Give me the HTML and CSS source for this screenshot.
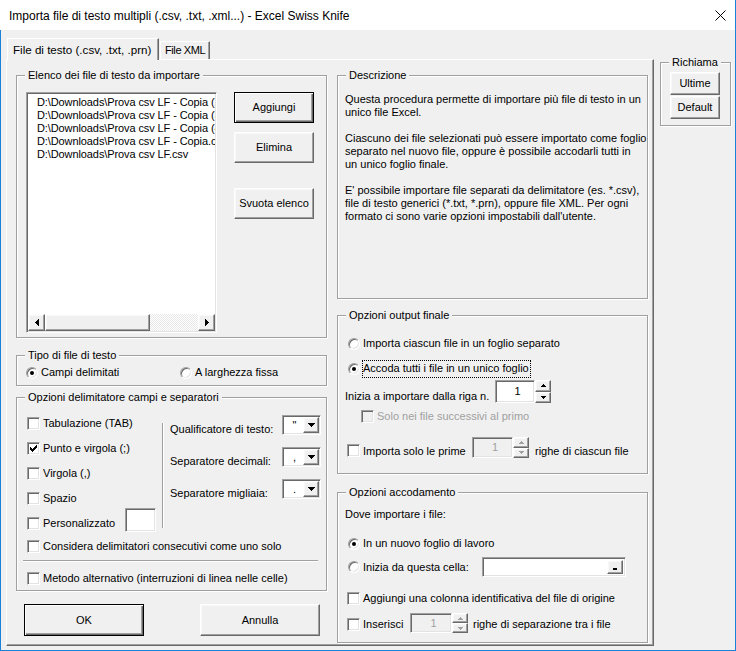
FILE: index.html
```html
<!DOCTYPE html>
<html lang="it">
<head>
<meta charset="utf-8">
<title>Importa file di testo multipli</title>
<link rel="stylesheet" href="styles.css">
</head>
<body>
<div class="window">
  <div class="titlebar">
    <span class="title">Importa file di testo multipli (.csv, .txt, .xml...) - Excel Swiss Knife</span>
    <svg class="close" width="11" height="11" viewBox="0 0 11 11" aria-hidden="true"><path d="M0.5 0.5L10.5 10.5M10.5 0.5L0.5 10.5" stroke="#000" stroke-width="1" fill="none"/></svg>
  </div>
  <div class="client">
    <div class="tabctl">
      <div class="tabs">
        <div class="tab active">File di testo (.csv, .txt, .prn)</div>
        <div class="tab tab2">File XML</div>
      </div>
      <div class="page">
        <div class="col">
          <fieldset class="group">
            <legend>Elenco dei file di testo da importare</legend>
            <div class="gbody list-body">
              <div class="listbox sunken">
                <div class="items">
                  <div>D:\Downloads\Prova csv LF - Copia (2).csv</div>
                  <div>D:\Downloads\Prova csv LF - Copia (3).csv</div>
                  <div>D:\Downloads\Prova csv LF - Copia (4).csv</div>
                  <div>D:\Downloads\Prova csv LF - Copia.csv</div>
                  <div>D:\Downloads\Prova csv LF.csv</div>
                </div>
                <div class="hscroll">
                  <span class="sb-btn raised"><svg width="4" height="7" viewBox="0 0 4 7"><path d="M0 3h1v1h-1zM1 2h1v3h-1zM2 1h1v5h-1zM3 0h1v7h-1z" fill="#000"/></svg></span>
                  <span class="sb-thumb raised"></span>
                  <span class="sb-track"></span>
                  <span class="sb-btn raised"><svg width="4" height="7" viewBox="0 0 4 7"><path d="M3 3h1v1h-1zM2 2h1v3h-1zM1 1h1v5h-1zM0 0h1v7h-1z" fill="#000"/></svg></span>
                </div>
              </div>
              <div class="btncol">
                <div class="btn default">Aggiungi</div>
                <div class="btn raised b-elimina">Elimina</div>
                <div class="btn raised b-svuota">Svuota elenco</div>
              </div>
            </div>
          </fieldset>

          <fieldset class="group g-tipo">
            <legend>Tipo di file di testo</legend>
            <div class="gbody tipo-body">
              <div class="opt"><span class="rad on"></span>Campi delimitati</div>
              <div class="opt"><span class="rad"></span>A larghezza fissa</div>
            </div>
          </fieldset>

          <fieldset class="group g-delim">
            <legend>Opzioni delimitatore campi e separatori</legend>
            <div class="gbody delim-body">
              <div class="delim-top">
                <div class="chkcol">
                  <div class="opt"><span class="chk sunken"></span>Tabulazione (TAB)</div>
                  <div class="opt"><span class="chk sunken"><svg width="9" height="9" viewBox="0 0 9 9"><path d="M1 3h1v3h-1zM2 4h1v3h-1zM3 5h1v3h-1zM4 4h1v3h-1zM5 3h1v3h-1zM6 2h1v3h-1zM7 1h1v3h-1z" fill="#000"/></svg></span>Punto e virgola (;)</div>
                  <div class="opt"><span class="chk sunken"></span>Virgola (,)</div>
                  <div class="opt"><span class="chk sunken"></span>Spazio</div>
                  <div class="opt"><span class="chk sunken"></span><span class="pers-label">Personalizzato</span><span class="tb sunken tb-pers"></span></div>
                </div>
                <div class="vsep"></div>
                <div class="qualcol">
                  <span class="qlabel">Qualificatore di testo:</span>
                  <span class="combo sunken"><span class="cv">"</span><span class="dd raised"><svg width="7" height="4" viewBox="0 0 7 4"><path d="M0 0h7v1h-7zM1 1h5v1h-5zM2 2h3v1h-3zM3 3h1v1h-1z" fill="#000"/></svg></span></span>
                  <span class="qlabel">Separatore decimali:</span>
                  <span class="combo sunken"><span class="cv">,</span><span class="dd raised"><svg width="7" height="4" viewBox="0 0 7 4"><path d="M0 0h7v1h-7zM1 1h5v1h-5zM2 2h3v1h-3zM3 3h1v1h-1z" fill="#000"/></svg></span></span>
                  <span class="qlabel">Separatore migliaia:</span>
                  <span class="combo sunken"><span class="cv">.</span><span class="dd raised"><svg width="7" height="4" viewBox="0 0 7 4"><path d="M0 0h7v1h-7zM1 1h5v1h-5zM2 2h3v1h-3zM3 3h1v1h-1z" fill="#000"/></svg></span></span>
                </div>
              </div>
              <div class="opt consid"><span class="chk sunken"></span>Considera delimitatori consecutivi come uno solo</div>
              <div class="hsep"></div>
              <div class="opt metodo"><span class="chk sunken"></span>Metodo alternativo (interruzioni di linea nelle celle)</div>
            </div>
          </fieldset>

          <div class="okrow">
            <div class="btn default b-ok">OK</div>
            <div class="btn raised b-ok">Annulla</div>
          </div>
        </div>

        <div class="col">
          <fieldset class="group">
            <legend>Descrizione</legend>
            <div class="gbody desc-body">
              <p>Questa procedura permette di importare più file di testo in un<br>unico file Excel.</p>
              <p>Ciascuno dei file selezionati può essere importato come foglio<br>separato nel nuovo file, oppure è possibile accodarli tutti in<br>un unico foglio finale.</p>
              <p>E' possibile importare file separati da delimitatore (es. *.csv),<br>file di testo generici (*.txt, *.prn), oppure file XML. Per ogni<br>formato ci sono varie opzioni impostabili dall'utente.</p>
            </div>
          </fieldset>

          <fieldset class="group g-out">
            <legend>Opzioni output finale</legend>
            <div class="gbody out-body">
              <div class="opt ind-r"><span class="rad"></span>Importa ciascun file in un foglio separato</div>
              <div class="opt ind-r r2"><span class="rad on"></span><span class="focus">Accoda tutti i file in un unico foglio</span></div>
              <div class="inizia">
                <span class="inizia-label">Inizia a importare dalla riga n.</span>
                <span class="tb sunken tb-riga">1</span>
                <span class="spin spin23"><span class="sp raised"><svg width="5" height="3" viewBox="0 0 5 3"><path d="M2 0h1v1h-1zM1 1h3v1h-3zM0 2h5v1h-5z" fill="#000"/></svg></span><span class="sp raised"><svg width="5" height="3" viewBox="0 0 5 3"><path d="M0 0h5v1h-5zM1 1h3v1h-3zM2 2h1v1h-1z" fill="#000"/></svg></span></span>
              </div>
              <div class="opt solo dis"><span class="chk sunken off"></span>Solo nei file successivi al primo</div>
              <div class="prime">
                <span class="chk sunken"></span>
                <span class="prime-label">Importa solo le prime</span>
                <span class="tb sunken off tb-prime">1</span>
                <span class="spin spin21 dis"><span class="sp raised"><svg width="5" height="3" viewBox="0 0 5 3"><path d="M2 0h1v1h-1zM1 1h3v1h-3zM0 2h5v1h-5z" fill="#a0a0a0"/></svg></span><span class="sp raised"><svg width="5" height="3" viewBox="0 0 5 3"><path d="M0 0h5v1h-5zM1 1h3v1h-3zM2 2h1v1h-1z" fill="#a0a0a0"/></svg></span></span>
                <span class="after">righe di ciascun file</span>
              </div>
            </div>
          </fieldset>

          <fieldset class="group g-acc">
            <legend>Opzioni accodamento</legend>
            <div class="gbody acc-body">
              <div class="dove">Dove importare i file:</div>
              <div class="opt ind-r nuovo"><span class="rad on"></span>In un nuovo foglio di lavoro</div>
              <div class="cella ind-r">
                <span class="rad"></span>
                <span class="cella-label">Inizia da questa cella:</span>
                <span class="refedit sunken"><span class="refbtn raised"><span class="bar"></span></span></span>
              </div>
              <div class="opt ind-c aggiungi"><span class="chk sunken"></span>Aggiungi una colonna identificativa del file di origine</div>
              <div class="inserisci ind-c">
                <span class="chk sunken"></span>
                <span class="ins-label">Inserisci</span>
                <span class="tb sunken off tb-ins">1</span>
                <span class="spin spin20 dis"><span class="sp raised"><svg width="5" height="3" viewBox="0 0 5 3"><path d="M2 0h1v1h-1zM1 1h3v1h-3zM0 2h5v1h-5z" fill="#a0a0a0"/></svg></span><span class="sp raised"><svg width="5" height="3" viewBox="0 0 5 3"><path d="M0 0h5v1h-5zM1 1h3v1h-3zM2 2h1v1h-1z" fill="#a0a0a0"/></svg></span></span>
                <span class="after">righe di separazione tra i file</span>
              </div>
            </div>
          </fieldset>
        </div>
      </div>
    </div>

    <fieldset class="group richiama">
      <legend>Richiama</legend>
      <div class="gbody rich-body">
        <div class="btn raised rbtn">Ultime</div>
        <div class="btn raised rbtn">Default</div>
      </div>
    </fieldset>
  </div>
</div>
</body>
</html>
```

FILE: styles.css
```css
* { box-sizing: border-box; }
html, body { margin: 0; padding: 0; }
body {
  width: 736px; height: 651px; overflow: hidden;
  background: #f0f0f0;
  font-family: "Liberation Sans", Arial, sans-serif;
  font-size: 11px; line-height: 13px; color: #000;
}
.window { width: 736px; height: 651px; display: flex; flex-direction: column; }

/* title bar */
.titlebar {
  height: 30px; flex: none; background: #fff;
  display: flex; align-items: center;
  padding-left: 9px;
  border-right: 1px solid #1a82d8;
}
.title { font-family: "Liberation Sans", Arial, sans-serif; font-size: 12px; line-height: 16px; padding-top: 1px; }
.close { margin-left: auto; margin-right: 9px; }

.client {
  flex: 1; display: flex; align-items: flex-start;
  padding: 8px 0 0 5px;
  border: 1px solid #1a82d8; border-top: 0;
}

/* 3d primitives */
.sunken {
  border: 1px solid; border-color: #a0a0a0 #fff #fff #a0a0a0;
  padding: 1px;
  box-shadow: inset 1px 1px #696969, inset -1px -1px #e3e3e3;
  background: #fff;
}
.sunken.off { background: #f0f0f0; }
.raised {
  border: 1px solid; border-color: #fff #696969 #696969 #fff;
  box-shadow: inset -1px -1px #a0a0a0, inset 1px 1px #f8f8f8;
  background: #f0f0f0;
}

/* tabs */
.tabctl { width: 648px; flex: none; }
.tabs { display: flex; align-items: flex-end; height: 21px; position: relative; z-index: 1; }
.tab {
  background: #f0f0f0;
  border: 1px solid; border-color: #fff #696969 transparent #fff; border-bottom: 0;
  box-shadow: inset -1px 0 #a0a0a0;
  white-space: nowrap; overflow: hidden;
}
.tab.active { margin-left: 1px; width: 152px; height: 22px; margin-bottom: -1px; padding-left: 5px; line-height: 21px; font-size: 11.6px; }
.tab2 { margin-left: 1px; width: 50px; height: 18px; padding-left: 4px; line-height: 17px; font-size: 11px; letter-spacing: -0.4px; }
.page {
  height: 587px;
  border: 1px solid; border-color: #fff #696969 #696969 #fff;
  box-shadow: inset -1px -1px #a0a0a0;
  padding: 9px 0 0 9px;
  display: flex; gap: 10px; align-items: flex-start;
}
.col { width: 311px; flex: none; display: flex; flex-direction: column; }

/* group boxes */
.group {
  margin: 0; padding: 0; min-inline-size: 0;
  border: 1px solid #a0a0a0;
  box-shadow: inset 1px 1px #fff, 1px 1px #fff;
}
.group > legend {
  margin-left: 8px; padding: 0 3px;
  height: 13px; line-height: 13px;
  background: #f0f0f0; white-space: nowrap;
}
.g-tipo { margin-top: 11px; }
.g-delim { margin-top: 5px; }
.g-out { margin-top: 10px; }
.g-acc { margin-top: 12px; }

/* generic option rows */
.opt { display: flex; align-items: center; height: 13px; gap: 3px; white-space: nowrap; }
.chk { width: 13px; height: 13px; flex: none; display: block; }
.chk svg { display: block; }
.rad {
  width: 12px; height: 12px; flex: none; border-radius: 50%; position: relative;
  border: 1px solid; border-color: #a0a0a0 #fff #fff #a0a0a0;
  box-shadow: inset 1px 1px #696969, inset -1px -1px #e3e3e3;
  background: #fff;
}
.rad.on::after {
  content: ""; position: absolute; left: 3px; top: 3px;
  width: 4px; height: 4px; border-radius: 50%; background: #000;
}
.btn { display: flex; align-items: center; justify-content: center; white-space: nowrap; background: #f0f0f0; }
.btn.default {
  border: 1px solid #000;
  box-shadow: inset 1px 1px #fff, inset -1px -1px #696969, inset -2px -2px #a0a0a0;
}

/* list group */
.list-body { display: flex; padding: 10px 0 4px 9px; }
.listbox { width: 191px; height: 241px; display: flex; flex-direction: column; }
.items { flex: 1; overflow: hidden; white-space: nowrap; padding: 2px 0 0 9px; letter-spacing: -0.1px; }
.hscroll { height: 17px; flex: none; display: flex; }
.sb-btn { width: 17px; height: 17px; flex: none; display: flex; align-items: center; justify-content: center; }
.sb-btn svg { display: block; }
.sb-thumb { width: 105px; height: 17px; flex: none; }
.sb-track {
  flex: 1; height: 17px;
  background: repeating-conic-gradient(#fff 0 25%, #e8e8e8 0 50%) 0 0 / 2px 2px;
}
.btncol { margin-left: 17px; display: flex; flex-direction: column; }
.btncol .btn { width: 80px; height: 31px; }
.b-elimina { margin-top: 9px; }
.b-svuota { margin-top: 25px; }

/* tipo */
.tipo-body { display: grid; grid-template-columns: 154px auto; padding: 4px 0 6px 9px; }

/* delim */
.delim-body { padding: 13px 4px 5px 10px; }
.delim-top { display: flex; align-items: flex-start; }
.chkcol { width: 135px; flex: none; display: flex; flex-direction: column; gap: 12px; }
.pers-label { width: 79px; flex: none; }
.tb-pers { width: 31px; height: 24px; align-self: flex-start; margin-top: -9px; flex: none; }
.vsep { width: 2px; height: 105px; margin-top: 6px; border-left: 1px solid #a0a0a0; border-right: 1px solid #fff; flex: none; }
.qualcol {
  margin-left: 6px; margin-top: -2px;
  display: grid; grid-template-columns: 112px 39px; grid-auto-rows: 20px; row-gap: 12px;
}
.qlabel { align-self: end; white-space: nowrap; line-height: 13px; margin-bottom: -1px; }
.combo { display: flex; width: 39px; height: 20px; }
.cv { flex: 1; text-align: center; line-height: 16px; padding-left: 2px; }
.dd { width: 16px; height: 16px; flex: none; display: flex; align-items: center; justify-content: center; }
.dd svg { display: block; }
.consid { margin-top: 10px; }
.hsep { margin: 7px 0 0 -4px; width: 295px; height: 2px; border-top: 1px solid #a0a0a0; border-bottom: 1px solid #fff; }
.metodo { margin-top: 10px; }

.okrow { display: flex; justify-content: space-between; margin-top: 13px; padding: 0 7px 0 8px; }
.b-ok { width: 120px; height: 32px; }

/* description */
.desc-body { height: 216px; padding: 11px 4px 0 7px; white-space: nowrap; }
.desc-body p { margin: 0 0 13px; }

/* output */
.out-body { padding: 15px 4px 15px 7px; }
.ind-r { margin-left: 3px; }
.ind-c { margin-left: 2px; }
.r2 { margin-top: 12px; gap: 2px; }
.focus { border: 1px dotted #000; padding: 1px 1px 2px 0; line-height: 13px; }
.inizia { display: flex; align-items: flex-end; height: 23px; margin-top: 5px; }
.inizia-label { width: 150px; flex: none; white-space: nowrap; }
.tb { display: block; flex: none; text-align: center; padding-left: 6px; }
.tb-riga { width: 40px; height: 23px; line-height: 19px; }
.spin { display: flex; flex-direction: column; width: 16px; flex: none; }
.spin23 { height: 23px; }
.spin21 { height: 21px; }
.spin20 { height: 20px; }
.sp { flex: 1; display: flex; align-items: center; justify-content: center; }
.sp svg { display: block; }
.solo { margin-top: 7px; margin-left: 16px; }
.dis { color: #a0a0a0; }
.prime { display: flex; align-items: flex-end; height: 21px; margin-top: 14px; margin-left: 2px; white-space: nowrap; }
.prime .chk { margin-bottom: 1px; }
.prime-label { width: 112px; flex: none; padding-left: 3px; }
.tb-prime { width: 41px; height: 21px; line-height: 17px; color: #a0a0a0; }
.after { margin-left: 6px; white-space: nowrap; }

/* accodamento */
.acc-body { padding: 9px 4px 9px 7px; }
.dove { height: 13px; }
.nuovo { margin-top: 16px; }
.cella { display: flex; align-items: center; height: 20px; margin-top: 7px; }
.cella-label { width: 122px; flex: none; padding-left: 3px; white-space: nowrap; }
.refedit { width: 144px; height: 20px; display: flex; justify-content: flex-end; align-items: center; }
.refbtn { width: 16px; height: 14px; margin-right: 1px; display: flex; align-items: flex-end; justify-content: center; padding-bottom: 3px; }
.bar { display: block; width: 4px; height: 2px; background: #000; }
.aggiungi { margin-top: 15px; }
.inserisci { display: flex; align-items: flex-end; height: 20px; margin-top: 8px; white-space: nowrap; }
.inserisci .chk { margin-bottom: 2px; }
.ins-label { width: 50px; flex: none; padding-left: 3px; margin-bottom: 2px; }
.tb-ins { width: 42px; height: 20px; line-height: 16px; color: #a0a0a0; }
.inserisci .after { margin-left: 5px; margin-bottom: 2px; }

/* richiama */
.richiama { width: 71px; flex: none; margin: 18px 0 0 6px; }
.rich-body { padding: 3px 10px 6px 9px; display: flex; flex-direction: column; gap: 1px; }
.rbtn { width: 50px; height: 23px; }
```
